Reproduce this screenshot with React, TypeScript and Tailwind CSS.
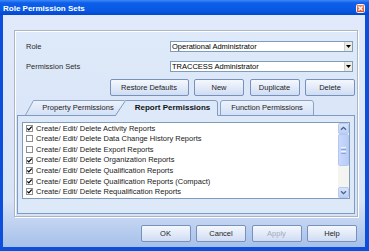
import React from "react";

const items = [
  { label: "Create/ Edit/ Delete Activity Reports", checked: true },
  { label: "Create/ Edit/ Delete Data Change History Reports", checked: false },
  { label: "Create/ Edit/ Delete Export Reports", checked: false },
  { label: "Create/ Edit/ Delete Organization Reports", checked: true },
  { label: "Create/ Edit/ Delete Qualification Reports", checked: true },
  { label: "Create/ Edit/ Delete Qualification Reports (Compact)", checked: true },
  { label: "Create/ Edit/ Delete Requalification Reports", checked: true },
];

function Btn({
  children,
  wide,
  disabled,
}: {
  children: React.ReactNode;
  wide?: boolean;
  disabled?: boolean;
}) {
  return (
    <div
      className={`${wide ? "w-[79px]" : "w-[50px]"} flex h-[17px] items-center justify-center rounded-[2px] border border-[#7891bb] bg-[linear-gradient(to_bottom,#f5f8fd_0%,#e4ecf9_45%,#cfdcf3_100%)] text-[7.5px] leading-none ${
        disabled ? "text-[#a2abbd]" : "text-[#1e1e1e]"
      }`}
    >
      {children}
    </div>
  );
}

function Select({ value }: { value: string }) {
  return (
    <div className="flex h-[11px] w-[183px] items-stretch border border-[#7f9db9] bg-white">
      <div className="flex-1 pl-[1px] text-[7.5px] leading-[9px] text-black">{value}</div>
      <div className="flex w-[8px] items-center justify-center border-l border-[#d4d0c8] bg-[#ecebe6]">
        <svg width="5" height="3" viewBox="0 0 5 3">
          <path d="M0 0 L5 0 L2.5 3 Z" fill="#000" />
        </svg>
      </div>
    </div>
  );
}

function Check({ checked }: { checked: boolean }) {
  return (
    <div className="flex h-[7px] w-[7px] items-center justify-center border border-[#8e8f8f] bg-white">
      {checked && (
        <svg width="5" height="5" viewBox="0 0 5 5">
          <path d="M0.3 2.4 L1.8 3.9 L4.7 0.6" stroke="#000" strokeWidth="1.2" fill="none" />
        </svg>
      )}
    </div>
  );
}

function ScrollBtn({ up }: { up?: boolean }) {
  return (
    <div className="flex h-[11px] w-[11px] items-center justify-center rounded-[2px] border border-[#b7c9f1] bg-[linear-gradient(to_bottom,#d8e4fc,#bcd0f8)]">
      <svg width="7" height="5" viewBox="0 0 7 5">
        <path
          d={up ? "M1 3.8 L3.5 1.3 L6 3.8" : "M1 1.2 L3.5 3.7 L6 1.2"}
          stroke="#4d6185"
          strokeWidth="1.3"
          fill="none"
        />
      </svg>
    </div>
  );
}

export default function App() {
  return (
    <div className="flex h-[251px] w-[369px] flex-col bg-[#0b4fdc] font-['Liberation_Sans',Arial,sans-serif]">
      {/* Title bar */}
      <div className="flex h-[15px] items-start justify-between bg-[linear-gradient(to_bottom,#3f88f6_0%,#0d5fea_20%,#0858e3_70%,#0446cf_100%)]">
        <div className="pl-[3px] pt-[4px] text-[8px] font-bold leading-[9px] text-white">
          Role Permission Sets
        </div>
        <div className="mr-[4px] mt-[4px] flex h-[9px] w-[9px] items-center justify-center rounded-[1.5px] border border-[#f3f3f3] bg-[linear-gradient(to_bottom,#f08a60,#d9502a)]">
          <svg width="5" height="5" viewBox="0 0 5 5">
            <path d="M0.5 0.5 L4.5 4.5 M4.5 0.5 L0.5 4.5" stroke="#fff" strokeWidth="1.3" />
          </svg>
        </div>
      </div>

      {/* Body */}
      <div className="ml-[3px] mr-[4px] flex h-[232px] flex-col bg-[linear-gradient(to_bottom,#e0eafa_0%,#d7e3f7_80%,#a6c0ea_100%)]">
        {/* Group box */}
        <div className="ml-[11px] mr-[7px] mt-[15px] flex h-[187px] flex-col border border-[#acb6c3] bg-[linear-gradient(to_bottom,#dee9f9,#d6e3f7)] pb-[2px] shadow-[inset_1px_1px_0_#ffffff,1px_1px_0_#ffffff]">
          <div className="mt-[10px] flex h-[11px] items-center justify-between">
            <div className="pl-[11px] text-[7.5px] leading-none text-[#2a2a2a]">Role</div>
            <div className="mr-[4px]">
              <Select value="Operational Administrator" />
            </div>
          </div>
          <div className="mt-[9px] flex h-[11px] items-center justify-between">
            <div className="pl-[11px] text-[7.5px] leading-none text-[#2a2a2a]">Permission Sets</div>
            <div className="mr-[4px]">
              <Select value="TRACCESS Administrator" />
            </div>
          </div>
          <div className="mt-[7px] flex justify-end gap-[5.5px] pr-[2px]">
            <Btn wide>Restore Defaults</Btn>
            <Btn>New</Btn>
            <Btn>Duplicate</Btn>
            <Btn>Delete</Btn>
          </div>

          {/* Tabs */}
          <div className="ml-[10px] mt-[4px] flex h-[15px] items-start">
            <div className="relative flex h-[15px] w-[100px] items-center justify-center pl-[8px] pr-[2px]">
              <svg className="absolute inset-0" width="100" height="15" viewBox="0 0 100 15">
                <defs>
                  <linearGradient id="tg" x1="0" y1="0" x2="0" y2="1">
                    <stop offset="0" stopColor="#edf3fc" />
                    <stop offset="1" stopColor="#d3e0f5" />
                  </linearGradient>
                </defs>
                <path d="M0.5 15 L8.5 0.5 L99.5 0.5 L99.5 15 Z" fill="url(#tg)" />
                <path d="M0.5 15 L8.5 0.5 L99.5 0.5" stroke="#8aa2c6" fill="none" />
              </svg>
              <span className="relative text-[7.5px] leading-none text-[#222]">Property Permissions</span>
            </div>
            <div className="relative z-10 -ml-[10px] flex h-[16px] w-[103px] items-center justify-center pl-[12px] pb-[1px]">
              <svg className="absolute inset-0" width="103" height="16" viewBox="0 0 103 16">
                <path d="M0.5 16 L10.5 0.5 L100 0.5 Q102.5 0.5 102.5 3 L102.5 16 Z" fill="#dde8f9" />
                <path d="M0.5 15.5 L10.5 0.5 L100 0.5 Q102.5 0.5 102.5 3 L102.5 15.5" stroke="#7f9bc2" fill="none" />
              </svg>
              <span className="relative text-[8px] font-bold leading-none text-[#111]">Report Permissions</span>
            </div>
            <div className="relative ml-[2px] flex h-[15px] w-[94px] items-center justify-center">
              <svg className="absolute inset-0" width="94" height="15" viewBox="0 0 94 15">
                <path d="M0.5 15 L0.5 3 Q0.5 0.5 3 0.5 L91 0.5 Q93.5 0.5 93.5 3 L93.5 15 Z" fill="url(#tg)" />
                <path d="M0.5 15 L0.5 3 Q0.5 0.5 3 0.5 L91 0.5 Q93.5 0.5 93.5 3 L93.5 15" stroke="#8aa2c6" fill="none" />
              </svg>
              <span className="relative text-[7.5px] leading-none text-[#222]">Function Permissions</span>
            </div>
          </div>

          {/* Tab panel */}
          <div className="ml-[2px] mr-[2px] h-[99px] border border-[#7f9bc2] bg-[#dde8f9] px-[4px] pt-[6px]">
            <div className="flex h-[77px] border border-[#7f9db9] bg-white">
              <div className="flex flex-1 flex-col pl-[3px]">
                {items.map((it) => (
                  <div key={it.label} className="flex h-[10.6px] items-center gap-[3px]">
                    <Check checked={it.checked} />
                    <span className="whitespace-nowrap text-[7.5px] leading-none text-[#1a1a1a]">{it.label}</span>
                  </div>
                ))}
              </div>
              <div className="flex w-[11px] flex-col bg-[#f4f4f0]">
                <ScrollBtn up />
                <div className="flex h-[32px] flex-col items-center justify-center gap-[1px] rounded-[2px] border border-[#b3c7f2] bg-[linear-gradient(to_right,#c9d9fb,#b8ccf7)]">
                  <div className="h-[1px] w-[5px] bg-[#eef3fe]" />
                  <div className="h-[1px] w-[5px] bg-[#8ca4d8]" />
                  <div className="h-[1px] w-[5px] bg-[#eef3fe]" />
                  <div className="h-[1px] w-[5px] bg-[#8ca4d8]" />
                </div>
                <div className="flex-1" />
                <ScrollBtn />
              </div>
            </div>
          </div>
        </div>

        {/* Bottom buttons */}
        <div className="mt-[8px] flex justify-end gap-[5.5px] pr-[8px]">
          <Btn>OK</Btn>
          <Btn>Cancel</Btn>
          <Btn disabled>Apply</Btn>
          <Btn>Help</Btn>
        </div>
      </div>
    </div>
  );
}
